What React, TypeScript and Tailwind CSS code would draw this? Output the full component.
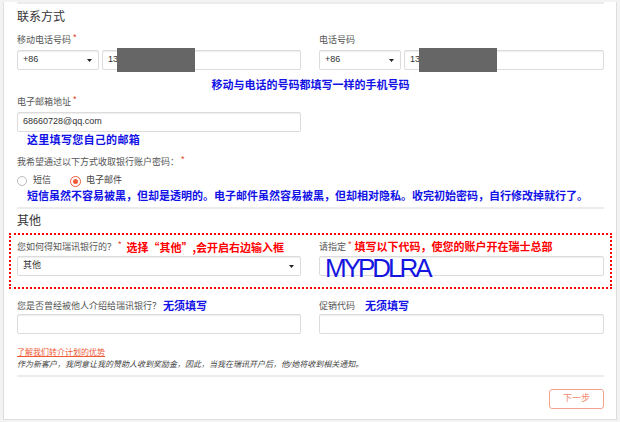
const font = "font-['Liberation_Sans','Noto_Sans_CJK_SC',sans-serif]";

const Star = () => <span className="ml-[2px] -mt-[5px] text-[9px] text-[#e0402a]">*</span>;

const Label = ({
	children,
	req,
	extra,
	className = "",
}: {
	children: React.ReactNode;
	req?: boolean;
	extra?: React.ReactNode;
	className?: string;
}) => (
	<div className={`flex h-[16px] items-center text-[9px] leading-none text-[#555] ${className}`}>
		{children}
		{req && <Star />}
		{extra}
	</div>
);

const Box = ({ children, className = "" }: { children?: React.ReactNode; className?: string }) => (
	<div
		className={`relative flex h-[20px] items-center rounded-[2px] border border-[#dcdcdc] bg-white px-[5px] text-[9px] text-[#333] shadow-[inset_0_1px_1px_rgba(0,0,0,0.07)] ${className}`}
	>
		{children}
	</div>
);

const Caret = () => (
	<svg width="5" height="3" viewBox="0 0 5 3" className="ml-auto mr-[1px]">
		<path d="M0 0h5L2.5 3z" fill="#222" />
	</svg>
);

const Phone = () => (
	<div className="flex gap-[3px]">
		<Box className="w-[82px] shrink-0">
			+86
			<Caret />
		</Box>
		<Box className="flex-1">
			13
			<div className="absolute left-[14px] top-[-3px] h-[24px] w-[78px] bg-[#666]" />
		</Box>
	</div>
);

const Blue = ({ children, className = "" }: { children: React.ReactNode; className?: string }) => (
	<span className={`text-[11px] font-bold leading-none text-[#1212e6] ${className}`}>{children}</span>
);

const Red = ({ children, className = "" }: { children: React.ReactNode; className?: string }) => (
	<span className={`text-[11px] font-bold leading-none text-[#f00] ${className}`}>{children}</span>
);

const Divider = ({ className = "" }: { className?: string }) => <div className={`h-[2px] bg-[#ececec] ${className}`} />;

export default function App() {
	return (
		<div className={`h-[422px] w-[620px] overflow-hidden bg-[#f3f3f3] ${font}`}>
			<div className="ml-[3px] h-[418px] w-[614px] border-x border-b border-[#dedede] bg-white pl-[13px] pr-[12px]">
				<Divider className="mt-[2px]" />
				<div className="flex h-[26px] items-center text-[12px] leading-none text-[#333]">联系方式</div>

				<div className="grid grid-cols-[284px_285px] gap-x-[18px]">
					<div>
						<Label req className="h-[20px]">移动电话号码</Label>
						<Phone />
					</div>
					<div>
						<Label className="h-[20px]">电话号码</Label>
						<Phone />
					</div>
				</div>

				<div className="mt-[6px] flex h-[18px] items-center justify-center">
					<Blue>移动与电话的号码都填写一样的手机号码</Blue>
				</div>

				<Label req className="h-[12px]">电子邮箱地址</Label>
				<div className="mt-[2px] w-[284px]">
					<Box>68660728@qq.com</Box>
				</div>
				<div className="flex h-[16px] items-center pl-[10px]">
					<Blue className="tracking-[0.3px]">这里填写您自己的邮箱</Blue>
				</div>

				<Label req className="mt-[2px] h-[24px]">我希望通过以下方式收取银行账户密码：</Label>
				<div className="flex h-[14px] items-center text-[9px] text-[#444]">
					<span className="h-[10px] w-[10px] rounded-full border border-[#bbb] bg-white" />
					<span className="ml-[6px]">短信</span>
					<span className="ml-[19px] flex h-[11px] w-[11px] items-center justify-center rounded-full border-[1.5px] border-[#ef5a35] bg-white">
						<span className="h-[5px] w-[5px] rounded-full bg-[#ef5a35]" />
					</span>
					<span className="ml-[5px]">电子邮件</span>
				</div>
				<div className="flex h-[16px] items-center pl-[10px]">
					<Blue>短信虽然不容易被黑，但却是透明的。电子邮件虽然容易被黑，但却相对隐私。收完初始密码，自行修改掉就行了。</Blue>
				</div>

				<Divider className="mt-[3px]" />
				<div className="flex h-[24px] items-center text-[12px] leading-none text-[#333]">其他</div>

				<div className="-mx-[8px] border-2 border-dotted border-[#f00] px-[6px] pt-[4px] pb-[11px]">
					<div className="grid grid-cols-[284px_285px] gap-x-[18px]">
						<div>
							<Label
								req
								extra={
									<Red className="ml-[5px] font-['Noto_Sans_CJK_SC',sans-serif]">选择“其他”,会开启右边输入框</Red>
								}
							>
								您如何得知瑞讯银行的？
							</Label>
							<Box className="mt-[1px]">
								其他
								<Caret />
							</Box>
						</div>
						<div>
							<Label req extra={<Red className="ml-[3px]">填写以下代码，使您的账户开在瑞士总部</Red>}>
								请指定
							</Label>
							<Box className="mt-[1px] overflow-visible">
								<span className="mt-[3px] text-[26px] leading-none tracking-[-3px] text-[#1515e0]">MYPDLRA</span>
							</Box>
						</div>
					</div>
				</div>

				<div className="mt-[9px] grid grid-cols-[284px_285px] gap-x-[18px]">
					<div>
						<Label extra={<Blue className="ml-[2px]">无须填写</Blue>}>您是否曾经被他人介绍给瑞讯银行？</Label>
						<Box />
					</div>
					<div>
						<Label extra={<Blue className="ml-[10px]">无须填写</Blue>}>促销代码</Label>
						<Box />
					</div>
				</div>

				<div className="mt-[13px] flex h-[12px] items-center text-[8px] leading-none text-[#ef5a35] underline">了解我们转介计划的优势</div>
				<div className="flex h-[12px] items-center text-[8px] italic leading-none text-[#444]">
					作为新客户，我同意让我的赞助人收到奖励金，因此，当我在瑞讯开户后，他/她将收到相关通知。
				</div>
				<Divider className="mt-[4px]" />

				<div className="mt-[12px] flex justify-end">
					<button className="flex h-[20px] w-[55px] items-center justify-center rounded-[3px] border-[1.5px] border-[#f4a48e] bg-white text-[9px] text-[#f08a70]">
						下一步
					</button>
				</div>
			</div>
		</div>
	);
}
